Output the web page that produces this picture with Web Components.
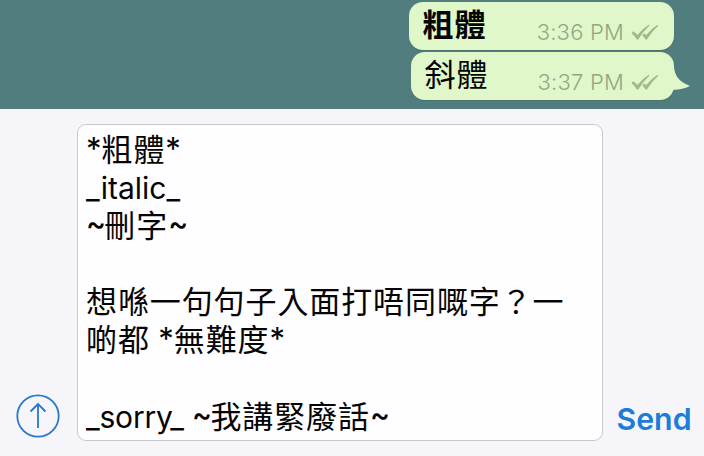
<!DOCTYPE html>
<html lang="zh-Hant">
<head>
<meta charset="utf-8">
<title>Chat</title>
<style>
html,body{margin:0;height:100%;overflow:hidden}
body{font-family:Inter,"Noto Sans CJK TC",sans-serif;color:#050505}
</style>
</head>
<body>
<chat-screen></chat-screen>
<script>
const define = (name, html) => {
  const t = document.createElement('template');
  t.innerHTML = html.trim();
  customElements.define(name, class extends HTMLElement {
    constructor() {
      super();
      this.attachShadow({ mode: 'open' }).append(t.content.cloneNode(true));
    }
  });
};

define('read-ticks', `
<style>:host{display:block;width:28px;height:17px}svg{display:block}</style>
<svg width="28" height="17" viewBox="0 0 28 17" fill="#a0b88b">
  <path d="M0.5 9.2L2.2 7.3Q4.8 8.8 6.4 11Q11 5 17.8 0.8L18.4 1.8Q12 7.5 7.2 15.6H5.8Q4 11.800 0.500 9.200Z"/>
  <path d="M11.300 11.600L13.300 9.300L15 11.200Q20 5 26.500 0.800L27.200 1.800Q20.500 8 15.800 15.600H14.400Q13.400 13.300 11.300 11.600Z"/>
</svg>`);

define('chat-bubble', `
<style>
:host{display:flex;box-sizing:border-box;position:relative;width:265px;height:48px;border-radius:14px;background:#dff7c9;padding:0 15px 0 13px;justify-content:space-between;box-shadow:0 1px 1px #3c655f66}
:host([tail]){width:263px}
.msg{font-size:31px;line-height:46px;letter-spacing:.9px;white-space:nowrap;padding-left:.5px}
:host([bold]) .msg{font-weight:700}
.meta{display:flex;align-items:flex-end;gap:7px;height:39px}
.time{font-size:22px;line-height:17px;color:#93a684;white-space:nowrap;letter-spacing:.2px;font-weight:300}
.tail{display:none;position:absolute;right:-16px;top:16px}
:host([tail]) .tail{display:block}
</style>
<svg class="tail" width="28" height="25" viewBox="0 0 28 25"><path d="M0 0H12Q13.500 10 21 14.500Q25 16.500 28 18Q19 22 12 21.700L0 24Z" fill="#dff7c9"/></svg>
<div class="msg"><slot></slot></div>
<div class="meta"><span class="time"><slot name="time"></slot></span><read-ticks></read-ticks></div>`);

define('text-line', `
<style>:host{display:block;height:38.100px;line-height:38.100px;font-size:30px;white-space:pre}:host([snug]){letter-spacing:-.2px}</style><slot></slot>`);

define('cjk-text', `
<style>:host{font-size:31px;letter-spacing:.9px}</style><slot></slot>`);

define('star-mark', `
<style>:host{font-size:31px;line-height:0;vertical-align:1px}</style><slot></slot>`);

define('tilde-mark', `
<style>:host{font-weight:500;letter-spacing:-1.700px;line-height:0;vertical-align:3px}</style><slot></slot>`);

define('message-field', `
<style>
:host{display:block;box-sizing:border-box;width:526px;height:317px;border:1px solid #c9c8cd;border-radius:9px;background:#fefdff;padding:6px 8px}
</style><slot></slot>`);

define('attach-button', `
<style>:host{display:block;width:44px;height:44px}svg{display:block}</style>
<svg width="44" height="44" viewBox="0 0 44 44" fill="none" stroke="#2778ce" stroke-width="1.800"><circle cx="22" cy="22" r="20.700"/><path d="M22 34V10M14.500 17.500L22 10L29.500 17.500"/></svg>`);

define('send-button', `
<style>:host{display:block;font:600 30.300px/38px Inter,sans-serif;color:#1c7cdc;white-space:nowrap}</style><slot></slot>`);

define('chat-screen', `
<style>
:host{display:flex;flex-direction:column;width:704px;height:456px;background:#f6f5f9}
.history{display:flex;flex-direction:column;align-items:flex-end;gap:2px;box-sizing:border-box;height:109px;padding:2px 30px 0 0;background:#527d7e}
.bar{display:flex;align-items:flex-end;box-sizing:border-box;height:347px;padding:0 0 15px 16px}
attach-button{margin:0 17px 3px 0}
send-button{margin:0 0 3px 13.500px}
</style>
<section class="history">
  <chat-bubble bold>粗體<span slot="time">3:36 PM</span></chat-bubble>
  <chat-bubble tail>斜體<span slot="time">3:37 PM</span></chat-bubble>
</section>
<section class="bar">
  <attach-button></attach-button>
  <message-field>
    <text-line><star-mark>*</star-mark><cjk-text>粗體</cjk-text><star-mark>*</star-mark></text-line>
    <text-line>_italic_</text-line>
    <text-line><tilde-mark>~</tilde-mark><cjk-text>刪字</cjk-text><tilde-mark>~</tilde-mark></text-line>
    <text-line></text-line>
    <text-line><cjk-text>想喺一句句子入面打唔同嘅字？一</cjk-text></text-line>
    <text-line><cjk-text>啲都</cjk-text> <star-mark>*</star-mark><cjk-text>無難度</cjk-text><star-mark>*</star-mark></text-line>
    <text-line></text-line>
    <text-line snug>_sorry_ <tilde-mark>~</tilde-mark><cjk-text>我講緊廢話</cjk-text><tilde-mark>~</tilde-mark></text-line>
  </message-field>
  <send-button>Send</send-button>
</section>`);
</script>
</body>
</html>
